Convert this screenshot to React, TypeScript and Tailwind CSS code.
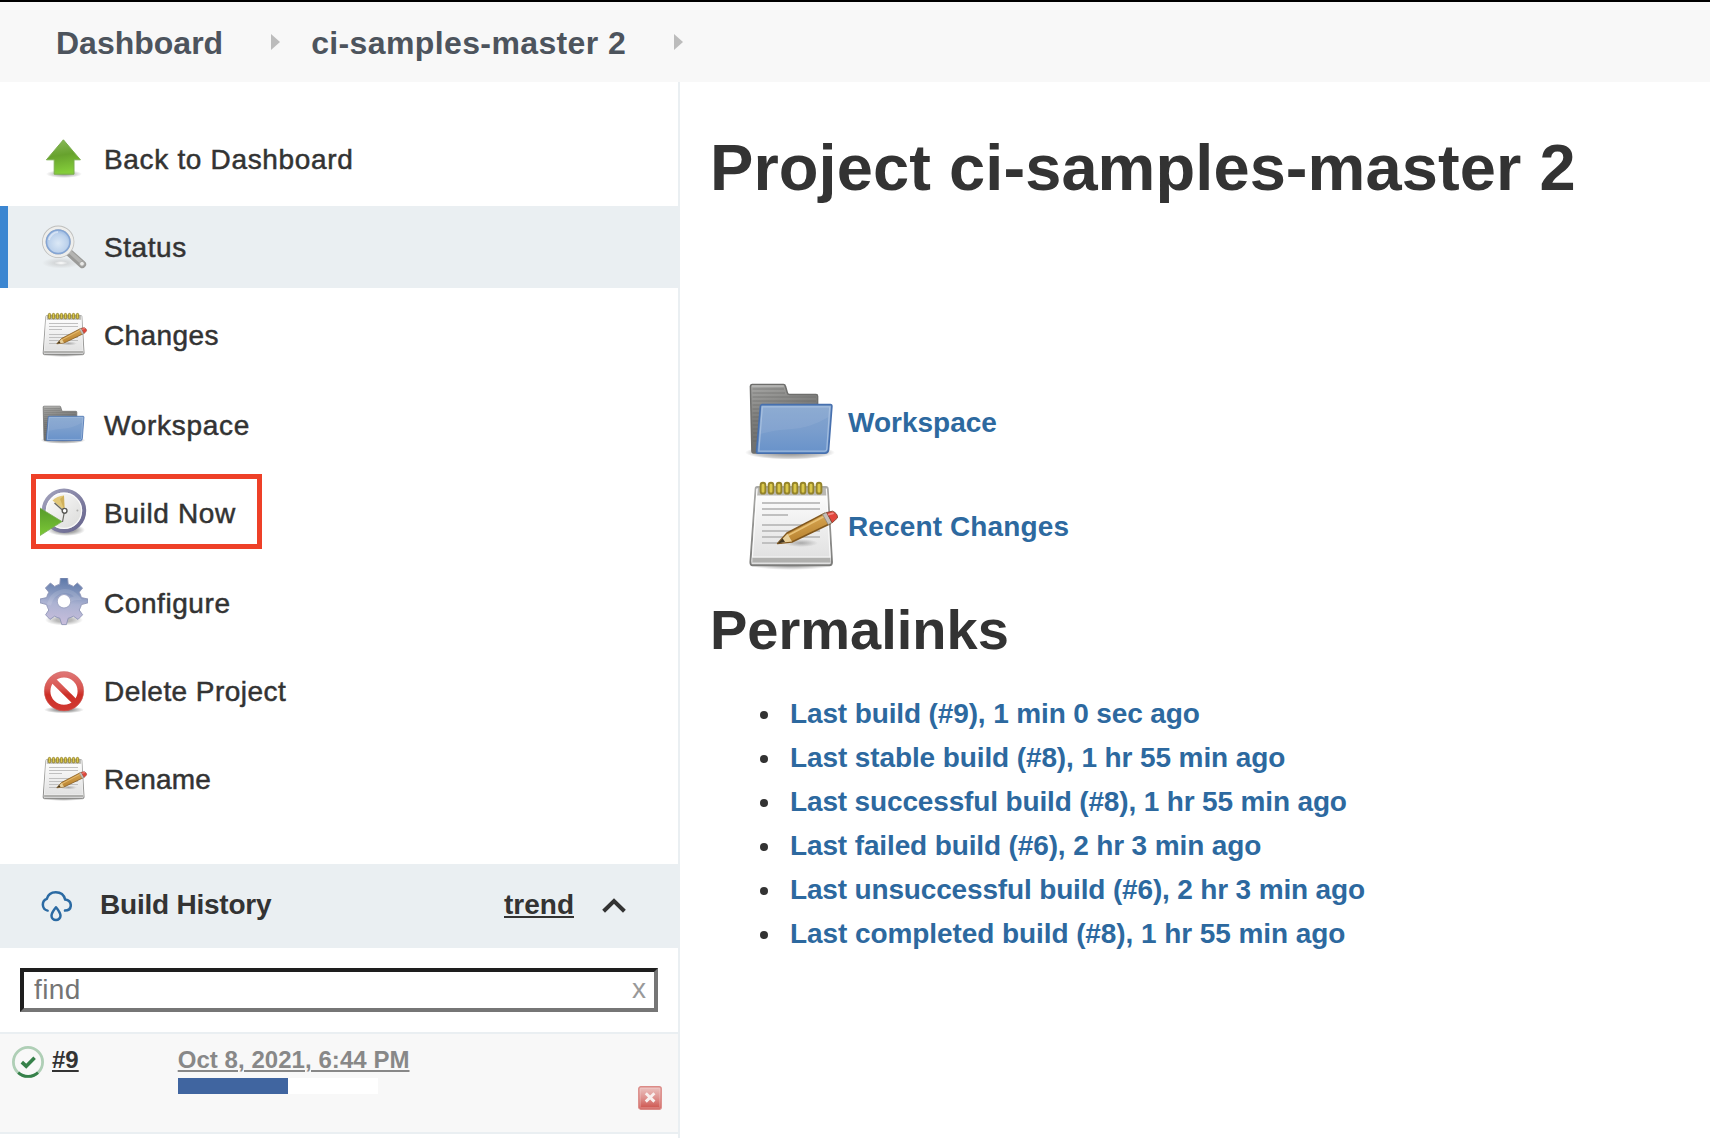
import React from "react";

type IconProps = { className?: string };

function ArrowUpIcon({ className }: IconProps) {
  return (
    <svg viewBox="0 0 48 48" className={className}>
      <defs>
        <linearGradient id="upFill" x1="0" y1="0" x2="0.15" y2="1">
          <stop offset="0" stopColor="#8cbb5c" />
          <stop offset="0.5" stopColor="#67a22d" />
          <stop offset="1" stopColor="#84cd3a" />
        </linearGradient>
        <radialGradient id="upShadow">
          <stop offset="0" stopColor="#000" stopOpacity="0.45" />
          <stop offset="1" stopColor="#000" stopOpacity="0" />
        </radialGradient>
      </defs>
      <ellipse cx="24" cy="40" rx="18" ry="4" fill="url(#upShadow)" />
      <path d="M23.4 5.8 40.4 25.8H34V40.2H14.2V25.8H6.4Z" fill="url(#upFill)" stroke="#7bad4d" strokeWidth="1" strokeLinejoin="round" />
    </svg>
  );
}

function SearchIcon({ className }: IconProps) {
  return (
    <svg viewBox="0 0 48 48" className={className}>
      <defs>
        <radialGradient id="lens" cx="0.5" cy="0.55" r="0.55">
          <stop offset="0" stopColor="#dbe8f6" />
          <stop offset="0.6" stopColor="#bdd2ec" />
          <stop offset="1" stopColor="#86aadb" />
        </radialGradient>
        <radialGradient id="lensShadow">
          <stop offset="0" stopColor="#fff" />
          <stop offset="0.35" stopColor="#d5d8da" />
          <stop offset="1" stopColor="#d5d8da" stopOpacity="0" />
        </radialGradient>
      </defs>
      <ellipse cx="21" cy="41" rx="19" ry="5.5" fill="url(#lensShadow)" />
      <path d="M28.5 30 42.3 42.3" stroke="#9a9a98" strokeWidth="7.6" strokeLinecap="round" />
      <path d="M30 30 42 41" stroke="#b4b4b2" strokeWidth="3.6" strokeLinecap="round" />
      <circle cx="42" cy="41.8" r="2.4" fill="#e9e9e8" stroke="#a6a6a4" />
      <circle cx="18.2" cy="19.8" r="14" fill="url(#lens)" stroke="#bebebc" strokeWidth="4.4" />
      <circle cx="18.2" cy="19.8" r="14" fill="none" stroke="#eeeeec" strokeWidth="2.8" />
      <circle cx="18.2" cy="19.8" r="11.8" fill="none" stroke="#84a5d4" strokeWidth="1.5" />
      <path d="M9 18a9.5 9.5 0 0 1 9-8" stroke="#eef4fb" strokeWidth="2" fill="none" opacity="0.6" />
    </svg>
  );
}

function NotepadIcon({ className }: IconProps) {
  return (
    <svg viewBox="0 0 96 96" className={className}>
      <defs>
        <linearGradient id="paper" x1="0" y1="0" x2="0" y2="1">
          <stop offset="0" stopColor="#ffffff" />
          <stop offset="1" stopColor="#dedede" />
        </linearGradient>
        <linearGradient id="paperEdge" x1="0" y1="0" x2="0" y2="1">
          <stop offset="0" stopColor="#aaaaa8" />
          <stop offset="1" stopColor="#7c7c7a" />
        </linearGradient>
        <linearGradient id="wood" x1="0.3" y1="0" x2="0.6" y2="1">
          <stop offset="0" stopColor="#e0ae58" />
          <stop offset="1" stopColor="#b37d2c" />
        </linearGradient>
        <radialGradient id="padShadow">
          <stop offset="0" stopColor="#000" stopOpacity="0.45" />
          <stop offset="1" stopColor="#000" stopOpacity="0" />
        </radialGradient>
      </defs>
      <ellipse cx="47" cy="89" rx="42" ry="5" fill="url(#padShadow)" />
      <path d="M13 11H82Q83.6 11 83.8 13L88 86Q88 89.3 85.5 89.3H8.5Q6.3 89.3 6.4 86L11.6 13Q11.8 11 13 11Z" fill="url(#paper)" stroke="url(#paperEdge)" strokeWidth="1.9" />
      <path d="M13.5 12H82.2L83 19.5H13Z" fill="#b9b8b3" />
      <path d="M13 13 8.2 85H86.4L82.4 13" fill="none" stroke="#fff" strokeWidth="1.2" opacity="0.8" />
      <path d="M8.3 81.5H86.4L86.7 86.5H8.3Z" fill="#b0b0ae" />
      <path d="M8.3 81H86.4" stroke="#f7f7f7" strokeWidth="1.2" />
      <path d="M18 27H76M18 33H76M18 39H44M18 49H76M18 55H76M18 61H76M18 67H38" stroke="#c0c0c0" strokeWidth="2.1" />
      {[0, 1, 2, 3, 4, 5, 6, 7].map((i) => (
        <rect key={i} x={16.6 + i * 8} y="6.8" width="4.8" height="10.8" rx="2.4" fill="#dbc84b" stroke="#94832a" strokeWidth="1.9" />
      ))}
      <ellipse cx="57" cy="67" rx="17" ry="4" fill="url(#padShadow)" opacity="0.6" />
      <path d="M33.6 67.6 43 57 81 37.2 86.5 47.5 48 66Z" fill="url(#wood)" stroke="#80571e" strokeWidth="1.5" strokeLinejoin="round" />
      <path d="M44 59.5 81.5 39.8" stroke="#e8c176" strokeWidth="1.7" />
      <path d="M34.4 67.1 43.4 57.8 48 65.4Z" fill="#e8d09b" />
      <path d="M33.6 67.6 38.6 62.2 41 65.9Z" fill="#42351f" />
      <path d="M78.6 38.4 83 36.2 88 46.8 84.2 48.6Z" fill="#c4bfb9" stroke="#8d867c" strokeWidth="0.8" />
      <path d="M82.6 36.5 88.5 35.2Q94 37.5 93.4 42L88.2 46.8Z" fill="#e2453b" stroke="#8f4a35" strokeWidth="1" strokeLinejoin="round" />
      <path d="M84.5 38.5 89 37.3" stroke="#f08d85" strokeWidth="1.8" strokeLinecap="round" />
    </svg>
  );
}

function FolderIcon({ className }: IconProps) {
  return (
    <svg viewBox="0 0 96 96" className={className}>
      <defs>
        <linearGradient id="folderBack" x1="0" y1="0" x2="0.3" y2="1">
          <stop offset="0" stopColor="#a8a8a6" />
          <stop offset="0.5" stopColor="#7c7c7a" />
          <stop offset="1" stopColor="#6b6b69" />
        </linearGradient>
        <linearGradient id="folderFront" x1="0" y1="0" x2="0" y2="1">
          <stop offset="0" stopColor="#86a6cf" />
          <stop offset="0.5" stopColor="#7b9ecd" />
          <stop offset="1" stopColor="#6892ca" />
        </linearGradient>
        <radialGradient id="folderShadow">
          <stop offset="0" stopColor="#000" stopOpacity="0.5" />
          <stop offset="0.8" stopColor="#000" stopOpacity="0.18" />
          <stop offset="1" stopColor="#000" stopOpacity="0" />
        </radialGradient>
      </defs>
      <ellipse cx="46" cy="80.5" rx="45" ry="7" fill="url(#folderShadow)" />
      <path d="M8 12.4H39.5Q41 12.4 41.4 14L43.3 20.6Q43.8 22.6 45.5 22.6H72Q73.6 22.6 73.6 24.2V40L20 81H9.6Q8 81 7.9 79L6.4 14.2Q6.4 12.4 8 12.4Z" fill="url(#folderBack)" stroke="#6e6e6c" strokeWidth="1.5" />
      <path d="M8.5 17H40M8.5 21H41M8.5 25H72M8.5 29H72M8.5 33H16M8.5 37H16M8.5 41H15.5M8.5 45H15.5M8.7 49H15M8.7 53H15M8.7 57H14.5M9 61H14M9 65H13.5M9 69H13" stroke="#5c5c5a" strokeWidth="1" opacity="0.45" />
      <path d="M8 14H39.8" stroke="#c2c2c0" strokeWidth="1.2" />
      <path d="M18 32.6H86.4Q88 32.6 87.9 34.4L84.6 77.5Q84 81.2 81 81.2H13.8Q12.4 81.2 12.6 79.2L16.4 34.4Q16.6 32.6 18 32.6Z" fill="url(#folderFront)" stroke="#4770ae" strokeWidth="1.6" />
      <path d="M18.3 34.8H85.8L82.8 77Q82.5 79.2 80.5 79.2H14.8Z" fill="none" stroke="#b5cae6" strokeWidth="1.3" opacity="0.7" />
      <path d="M18.6 35.4H85.4L84.6 45Q66 56 48 57T16.6 62Z" fill="#fff" opacity="0.07" />
    </svg>
  );
}

function BuildIcon({ className }: IconProps) {
  return (
    <svg viewBox="0 0 48 48" className={className}>
      <defs>
        <linearGradient id="rim" x1="0" y1="0" x2="1" y2="1">
          <stop offset="0" stopColor="#a3a3bd" />
          <stop offset="1" stopColor="#65638c" />
        </linearGradient>
        <linearGradient id="face" x1="0" y1="0" x2="1" y2="1">
          <stop offset="0" stopColor="#ffffff" />
          <stop offset="1" stopColor="#d8d8d6" />
        </linearGradient>
        <linearGradient id="play" x1="0" y1="0" x2="0" y2="1">
          <stop offset="0" stopColor="#569a2a" />
          <stop offset="1" stopColor="#7cc837" />
        </linearGradient>
        <radialGradient id="clockShadow">
          <stop offset="0.5" stopColor="#000" stopOpacity="0.35" />
          <stop offset="1" stopColor="#000" stopOpacity="0" />
        </radialGradient>
      </defs>
      <ellipse cx="26" cy="42" rx="19" ry="6" fill="url(#clockShadow)" />
      <circle cx="24" cy="22.8" r="20.2" fill="url(#face)" stroke="url(#rim)" strokeWidth="4" />
      <circle cx="24" cy="22.8" r="17.6" fill="none" stroke="#fff" strokeWidth="1.2" opacity="0.8" />
      <path d="M24.5 22.4 12.5 12.6Q17 8 24 7.6Z" fill="#e2c878" />
      <path d="M24.5 22.4 20 11 24 7.6Z" fill="#d0b05a" />
      <path d="M14.5 14.9 23 22.5" stroke="#6a6a60" strokeWidth="1.4" />
      <path d="M24.5 23 22.5 34" stroke="#6b6b65" strokeWidth="1.2" />
      <circle cx="24.6" cy="22.8" r="2.4" fill="#fff" stroke="#5a5a56" strokeWidth="1.4" />
      <circle cx="37.4" cy="22.4" r="1" fill="#b0b0ae" />
      <path d="M0 20 22 33.6 0 47.6Z" fill="url(#play)" />
      <path d="M0 20 22 33.6 0 47.6" fill="none" stroke="#79ab54" strokeWidth="1" opacity="0.8" />
    </svg>
  );
}

function GearIcon({ className }: IconProps) {
  return (
    <svg viewBox="0 0 48 48" className={className}>
      <defs>
        <linearGradient id="gearFill" x1="0.55" y1="0" x2="0.45" y2="1">
          <stop offset="0" stopColor="#5b77a8" />
          <stop offset="0.35" stopColor="#8798bf" />
          <stop offset="0.55" stopColor="#abb2d2" />
          <stop offset="1" stopColor="#c9bedc" />
        </linearGradient>
        <radialGradient id="gearShadow">
          <stop offset="0.4" stopColor="#000" stopOpacity="0.28" />
          <stop offset="1" stopColor="#000" stopOpacity="0" />
        </radialGradient>
      </defs>
      <ellipse cx="24" cy="42" rx="19" ry="5.5" fill="url(#gearShadow)" />
      <path
        d="M20.4 0H27.6L28.2 6.2Q31 7 33.4 8.4L37.4 5 42.6 10 39.2 14.2Q40.7 16.8 41.4 19.6L48 21V24.8L41.4 26.6Q40.7 29.6 39.2 32L42.6 36.8 38 41.4 33.4 38.2Q31 39.6 28.2 40.2L26.4 46.6H21.8L19.8 40.2Q17 39.6 14.6 38.2L10 41.4 5.6 36.8 8.8 32Q7.3 29.6 6.6 26.6L0 24.8V21L6.6 19.6Q7.3 16.8 8.8 14.2L5.4 10 10.4 5 14.6 8.4Q17 7 19.8 6.2Z"
        fill="url(#gearFill)"
        stroke="#8d94b6"
        strokeWidth="0.9"
        strokeLinejoin="round"
      />
      <path d="M9 27Q12 14 25 13Q33 13 38 20 32 20 29 23" fill="none" stroke="#fff" strokeWidth="4" opacity="0.12" />
      <circle cx="24" cy="23.3" r="6.8" fill="#fff" stroke="#a3a9c6" strokeWidth="1.1" />
    </svg>
  );
}

function DeleteIcon({ className }: IconProps) {
  return (
    <svg viewBox="0 0 48 48" className={className}>
      <defs>
        <linearGradient id="ban" gradientUnits="userSpaceOnUse" x1="0" y1="4" x2="0" y2="45">
          <stop offset="0" stopColor="#e07b7b" />
          <stop offset="0.45" stopColor="#d95550" />
          <stop offset="0.6" stopColor="#cc2f27" />
          <stop offset="1" stopColor="#d23a33" />
        </linearGradient>
        <radialGradient id="banShadow">
          <stop offset="0.3" stopColor="#000" stopOpacity="0.45" />
          <stop offset="1" stopColor="#000" stopOpacity="0" />
        </radialGradient>
      </defs>
      <ellipse cx="24" cy="43.8" rx="20" ry="3.6" fill="url(#banShadow)" />
      <circle cx="24" cy="25.2" r="16.7" fill="#fff" stroke="url(#ban)" strokeWidth="6.2" />
      <path d="M13 14.2 35.5 36.4" stroke="url(#ban)" strokeWidth="6" />
      <circle cx="24" cy="25.2" r="19.6" fill="none" stroke="#cc6a66" strokeWidth="0.8" opacity="0.6" />
    </svg>
  );
}

function CloudDropIcon({ className }: IconProps) {
  return (
    <svg viewBox="0 0 32 32" className={className} fill="none" stroke="#2b6aa3" strokeWidth="2.5" strokeLinecap="round" strokeLinejoin="round">
      <path d="M7.6 20.6A6.2 6.2 0 0 1 6.8 8.8Q8.6 2.2 15.8 2.2 23.4 2.2 25.2 9.6 30.8 10.6 30.8 15.4 30.6 20.4 25 20.6" />
      <path d="M16 17.2Q11.5 22.6 11.5 25.8A4.5 4.2 0 0 0 20.5 25.8Q20.5 22.6 16 17.2Z" />
    </svg>
  );
}

function StopIcon({ className }: IconProps) {
  return (
    <svg viewBox="0 0 24 24" className={className}>
      <defs>
        <linearGradient id="stopFill" x1="0" y1="0" x2="0" y2="1">
          <stop offset="0" stopColor="#ecc4c2" />
          <stop offset="0.5" stopColor="#de918e" />
          <stop offset="1" stopColor="#cc4f48" />
        </linearGradient>
      </defs>
      <rect x="0.8" y="0.8" width="22.4" height="22.4" rx="2" fill="url(#stopFill)" stroke="#db8a86" strokeWidth="1.4" />
      <rect x="2.3" y="2.3" width="19.4" height="19.4" rx="1" fill="none" stroke="#f4d3d1" strokeWidth="0.9" opacity="0.4" />
      <path d="M7.8 7.2 16.4 15.6M16.4 7.2 7.8 15.6" stroke="#f8efee" strokeWidth="2.9" />
    </svg>
  );
}

function SuccessIcon({ className }: IconProps) {
  return (
    <svg viewBox="0 0 32 32" className={className} fill="none">
      <circle cx="16" cy="16" r="14.6" stroke="#afcfb6" strokeWidth="2.8" />
      <path d="M6.2 26.6A14.6 14.6 0 0 0 26 26.6" stroke="#36814a" strokeWidth="2.8" />
      <path d="M9.8 16.2 14.2 20.2 22.6 11.8" stroke="#36814a" strokeWidth="3.6" />
    </svg>
  );
}

function Separator() {
  return (
    <svg viewBox="0 0 9 16" className="h-4 w-[9px]">
      <path d="M0 0 9 8 0 16Z" fill="#bcbcbc" />
    </svg>
  );
}

const tasks = [
  { label: "Back to Dashboard", Icon: ArrowUpIcon, gap: "mt-9", tracking: "tracking-[0.67px]" },
  { label: "Status", Icon: SearchIcon, gap: "mt-1.5", tracking: "tracking-[0.57px]", active: true },
  { label: "Changes", Icon: NotepadIcon, gap: "mt-1.5", tracking: "tracking-[0.39px]" },
  { label: "Workspace", Icon: FolderIcon, gap: "mt-2", tracking: "tracking-[0.72px]" },
  { label: "Build Now", Icon: BuildIcon, gap: "mt-1.5", tracking: "tracking-[0.65px]", marked: true },
  { label: "Configure", Icon: GearIcon, gap: "mt-2", tracking: "tracking-[0.57px]" },
  { label: "Delete Project", Icon: DeleteIcon, gap: "mt-1.5", tracking: "tracking-[0.45px]" },
  { label: "Rename", Icon: NotepadIcon, gap: "mt-1.5", tracking: "tracking-[0.2px]" },
];

const permalinks = [
  { text: "Last build (#9), 1 min 0 sec ago", tracking: "tracking-[-0.13px]" },
  { text: "Last stable build (#8), 1 hr 55 min ago", tracking: "tracking-[-0.11px]" },
  { text: "Last successful build (#8), 1 hr 55 min ago", tracking: "tracking-[-0.15px]" },
  { text: "Last failed build (#6), 2 hr 3 min ago", tracking: "tracking-[-0.13px]" },
  { text: "Last unsuccessful build (#6), 2 hr 3 min ago", tracking: "tracking-[-0.16px]" },
  { text: "Last completed build (#8), 1 hr 55 min ago", tracking: "tracking-[-0.08px]" },
];

export default function App() {
  return (
    <div className="flex h-[1138px] w-[1710px] flex-col overflow-hidden bg-white font-['Liberation_Sans',Arial,sans-serif] text-[28px] text-[#333333]">
      <header className="flex h-[82px] shrink-0 items-center border-t-2 border-black bg-[#f8f8f8] pl-14 text-[32px] font-bold text-[#4d545d]">
        <a className="pt-0.5">Dashboard</a>
        <div className="ml-12"><Separator /></div>
        <a className="ml-[31px] pt-0.5 tracking-[0.38px]">ci-samples-master 2</a>
        <div className="ml-12"><Separator /></div>
      </header>

      <div className="flex min-h-0 flex-1">
        <aside className="w-[680px] shrink-0 border-r-2 border-[#eaeff2]">
          <nav>
            {tasks.map(({ label, Icon, gap, tracking, active, marked }) => (
              <a key={label} className={`relative flex h-[82px] items-center ${gap} ${active ? "border-l-8 border-[#3b86d1] bg-[#eaeff2] pl-8" : "pl-10"}`}>
                <Icon className="size-12 shrink-0 -translate-y-px" />
                <span className={`ml-4 pt-0.5 leading-8 [-webkit-text-stroke:0.5px_#333333] ${tracking}`}>{label}</span>
                {marked && <span className="absolute top-[2px] left-[31px] h-[75px] w-[231px] border-5 border-[#ee4028]" />}
              </a>
            ))}
          </nav>

          <section className="mt-11">
            <div className="flex h-[84px] w-[680px] items-center bg-[#eaeff2] pl-10 font-bold">
              <CloudDropIcon className="size-8" />
              <span className="ml-7 pb-[3px] tracking-[-0.22px]">Build History</span>
              <a className="ml-auto pb-[3px] underline decoration-2 underline-offset-2">trend</a>
              <svg viewBox="0 0 24 16" className="mr-[54px] ml-7 h-4 w-6" fill="none" stroke="#333333" strokeWidth="4">
                <path d="M1.6 13.2 12 3 22.4 13.2" />
              </svg>
            </div>
            <div className="flex h-[84px] items-center px-5">
              <div className="flex h-11 w-full items-center justify-between border-4 border-t-[#1e1e1e] border-r-[#767676] border-b-[#767676] border-l-[#1e1e1e] pr-2 pl-2.5 leading-9 text-[#757575]">
                <span className="tracking-[0.4px]">find</span>
                <span className="pb-[3px] text-[#999999]">x</span>
              </div>
            </div>
            <div className="flex h-[102px] border-y-2 border-[#eaeff2] bg-[#f8f8f8] pt-3 pl-3 text-2xl font-bold">
              <SuccessIcon className="size-8 shrink-0" />
              <a className="ml-2 h-7 leading-7 underline decoration-2 underline-offset-2">#9</a>
              <div className="ml-[99px]">
                <a className="block h-8 leading-7 tracking-[0.05px] text-[#888888] underline decoration-2 underline-offset-2">Oct 8, 2021, 6:44 PM</a>
                <div className="h-4 w-[200px] bg-white">
                  <div className="h-4 w-[110px] bg-[#4065a0]" />
                </div>
              </div>
              <StopIcon className="mt-10 mr-4 ml-auto size-6" />
            </div>
          </section>
        </aside>

        <main className="flex-1 pl-[30px]">
          <h1 className="mt-12 h-[76px] text-[65px] leading-[76px] font-bold tracking-[0.08px]">Project ci-samples-master 2</h1>
          <div className="mt-[166px] flex flex-col gap-2 pl-[34px] font-bold text-[#2d699f]">
            <a className="flex h-24 items-center">
              <FolderIcon className="size-24" />
              <span className="ml-2 pt-[5px]">Workspace</span>
            </a>
            <a className="flex h-24 items-center">
              <NotepadIcon className="size-24" />
              <span className="ml-2 pt-[5px] tracking-[0.12px]">Recent Changes</span>
            </a>
          </div>
          <h2 className="mt-[25px] h-[67px] text-[56px] leading-[66px] font-bold">Permalinks</h2>
          <ul className="mt-[28px] pl-[50px]">
            {permalinks.map(({ text, tracking }) => (
              <li key={text} className="flex h-11 items-center">
                <span className="size-2 translate-y-px rounded-full bg-[#333333]" />
                <a className={`ml-[22px] font-bold text-[#2d699f] ${tracking}`}>{text}</a>
              </li>
            ))}
          </ul>
        </main>
      </div>
    </div>
  );
}
